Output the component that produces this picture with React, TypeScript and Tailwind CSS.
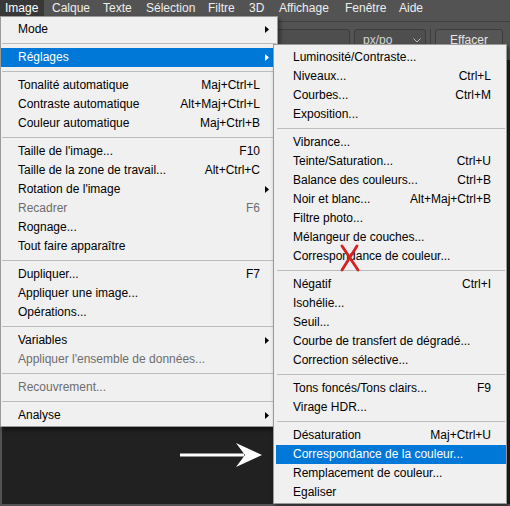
import React from "react";

type Item =
  | { sep: true }
  | { label: string; shortcut?: string; arrow?: boolean; disabled?: boolean; active?: boolean };

const S: Item = { sep: true };

const mainItems: Item[] = [
  { label: "Mode", arrow: true },
  S,
  { label: "Réglages", arrow: true, active: true },
  S,
  { label: "Tonalité automatique", shortcut: "Maj+Ctrl+L" },
  { label: "Contraste automatique", shortcut: "Alt+Maj+Ctrl+L" },
  { label: "Couleur automatique", shortcut: "Maj+Ctrl+B" },
  S,
  { label: "Taille de l'image...", shortcut: "F10" },
  { label: "Taille de la zone de travail...", shortcut: "Alt+Ctrl+C" },
  { label: "Rotation de l'image", arrow: true },
  { label: "Recadrer", shortcut: "F6", disabled: true },
  { label: "Rognage..." },
  { label: "Tout faire apparaître" },
  S,
  { label: "Dupliquer...", shortcut: "F7" },
  { label: "Appliquer une image..." },
  { label: "Opérations..." },
  S,
  { label: "Variables", arrow: true },
  { label: "Appliquer l'ensemble de données...", disabled: true },
  S,
  { label: "Recouvrement...", disabled: true },
  S,
  { label: "Analyse", arrow: true },
];

const subItems: Item[] = [
  { label: "Luminosité/Contraste..." },
  { label: "Niveaux...", shortcut: "Ctrl+L" },
  { label: "Courbes...", shortcut: "Ctrl+M" },
  { label: "Exposition..." },
  S,
  { label: "Vibrance..." },
  { label: "Teinte/Saturation...", shortcut: "Ctrl+U" },
  { label: "Balance des couleurs...", shortcut: "Ctrl+B" },
  { label: "Noir et blanc...", shortcut: "Alt+Maj+Ctrl+B" },
  { label: "Filtre photo..." },
  { label: "Mélangeur de couches..." },
  { label: "Correspondance de couleur..." },
  S,
  { label: "Négatif", shortcut: "Ctrl+I" },
  { label: "Isohélie..." },
  { label: "Seuil..." },
  { label: "Courbe de transfert de dégradé..." },
  { label: "Correction sélective..." },
  S,
  { label: "Tons foncés/Tons clairs...", shortcut: "F9" },
  { label: "Virage HDR..." },
  S,
  { label: "Désaturation", shortcut: "Maj+Ctrl+U" },
  { label: "Correspondance de la couleur...", active: true },
  { label: "Remplacement de couleur..." },
  { label: "Egaliser" },
];

function Rows({ items, pr }: { items: Item[]; pr: string }) {
  return (
    <>
      {items.map((it, i) => {
        if ("sep" in it) {
          return (
            <div key={i} className="h-[9px] flex items-center px-[1px]">
              <div className="h-px w-full bg-[#bcbcbc]" />
            </div>
          );
        }
        const color = it.active ? "text-white" : it.disabled ? "text-[#6d6d6d]" : "text-black";
        return (
          <div
            key={i}
            className={`relative flex h-[19px] items-center justify-between pl-[17px] ${pr} leading-[19px] whitespace-nowrap ${color} ${
              it.active ? "bg-[#0078d7]" : ""
            }`}
          >
            <span>{it.label}</span>
            {it.shortcut && <span>{it.shortcut}</span>}
            {it.arrow && (
              <svg className="absolute right-[8px] top-[6px]" width="4" height="7" viewBox="0 0 4 7">
                <path d="M0 0L4 3.5L0 7Z" fill={it.active ? "#ffffff" : "#000000"} />
              </svg>
            )}
          </div>
        );
      })}
    </>
  );
}

const bar: { t: string; w: string }[] = [
  { t: "Image", w: "w-[44px]" },
  { t: "Calque", w: "w-[48px]" },
  { t: "Texte", w: "w-[40px]" },
  { t: "Sélection", w: "w-[59px]" },
  { t: "Filtre", w: "w-[38px]" },
  { t: "3D", w: "w-[27px]" },
  { t: "Affichage", w: "w-[63px]" },
  { t: "Fenêtre", w: "w-[51px]" },
  { t: "Aide", w: "w-[40px]" },
];

export default function App() {
  return (
    <div className="relative w-[510px] h-[506px] overflow-hidden bg-[#535353] font-['Liberation_Sans',Arial,sans-serif] text-[12px] flex flex-col">
      {/* menu bar */}
      <div className="flex h-[16px] gap-[3px] leading-[16px] text-[#eeeeee]">
        {bar.map((b, i) => (
          <div key={b.t} className={`${b.w} shrink-0 pl-[5px] whitespace-nowrap ${i === 0 ? "bg-[#383838] text-white" : ""}`}>
            {b.t}
          </div>
        ))}
      </div>
      {/* options bar */}
      <div className="h-[5px]" />
      <div className="h-px bg-[#424242]" />
      <div className="flex h-[38px] items-start justify-end gap-[4px] pt-[7px] pr-[7px]">
        <div className="h-[22px] w-[80px] rounded-[3px] border border-[#3c3c3c] bg-[#4e4e4e]" />
        <div className="flex h-[22px] w-[72px] items-center justify-between rounded-[3px] border border-[#3c3c3c] bg-[#4e4e4e] pl-[8px] pr-[4px] text-[#d6d6d6]">
          <span>px/po</span>
          <svg width="8" height="5" viewBox="0 0 8 5">
            <path d="M0.5 0.5L4 4L7.5 0.5" stroke="#bbbbbb" strokeWidth="1" fill="none" />
          </svg>
        </div>
        <div className="h-[22px] w-px bg-[#3e3e3e]" />
        <div className="flex h-[22px] w-[68px] items-center justify-center rounded-[3px] border border-[#3c3c3c] bg-[#565656] text-[#e6e6e6]">
          Effacer
        </div>
      </div>
      {/* workspace */}
      <div className="flex-1 pl-[2px] pb-[2px]">
        <div className="h-full w-full bg-[#212121]" />
      </div>

      {/* main dropdown */}
      <div className="absolute left-0 top-[16px] w-[278px] border border-[#9a9a9a] bg-[#f0f0f0] pt-[3px] pb-[1px] shadow-[2px_3px_4px_rgba(0,0,0,0.45)]">
        <Rows items={mainItems} pr="pr-[17px]" />
      </div>

      {/* submenu */}
      <div className="absolute left-[273px] top-[44px] w-[234px] border border-[#9a9a9a] bg-[#f0f0f0] pt-[3px] pb-[1px] pl-[2px] shadow-[2px_3px_4px_rgba(0,0,0,0.45)]">
        <Rows items={subItems} pr="pr-[15px]" />
      </div>

      {/* annotations */}
      <svg className="pointer-events-none absolute left-0 top-0" width="510" height="506" viewBox="0 0 510 506">
        <path d="M342 246L358 270M357 246L342 270" stroke="#d42222" strokeWidth="2.8" strokeLinecap="round" fill="none" />
        <rect x="180" y="453.5" width="64" height="3" fill="#ffffff" />
        <path d="M262 455L236 443L245 455L236 467Z" fill="#ffffff" />
      </svg>
    </div>
  );
}
